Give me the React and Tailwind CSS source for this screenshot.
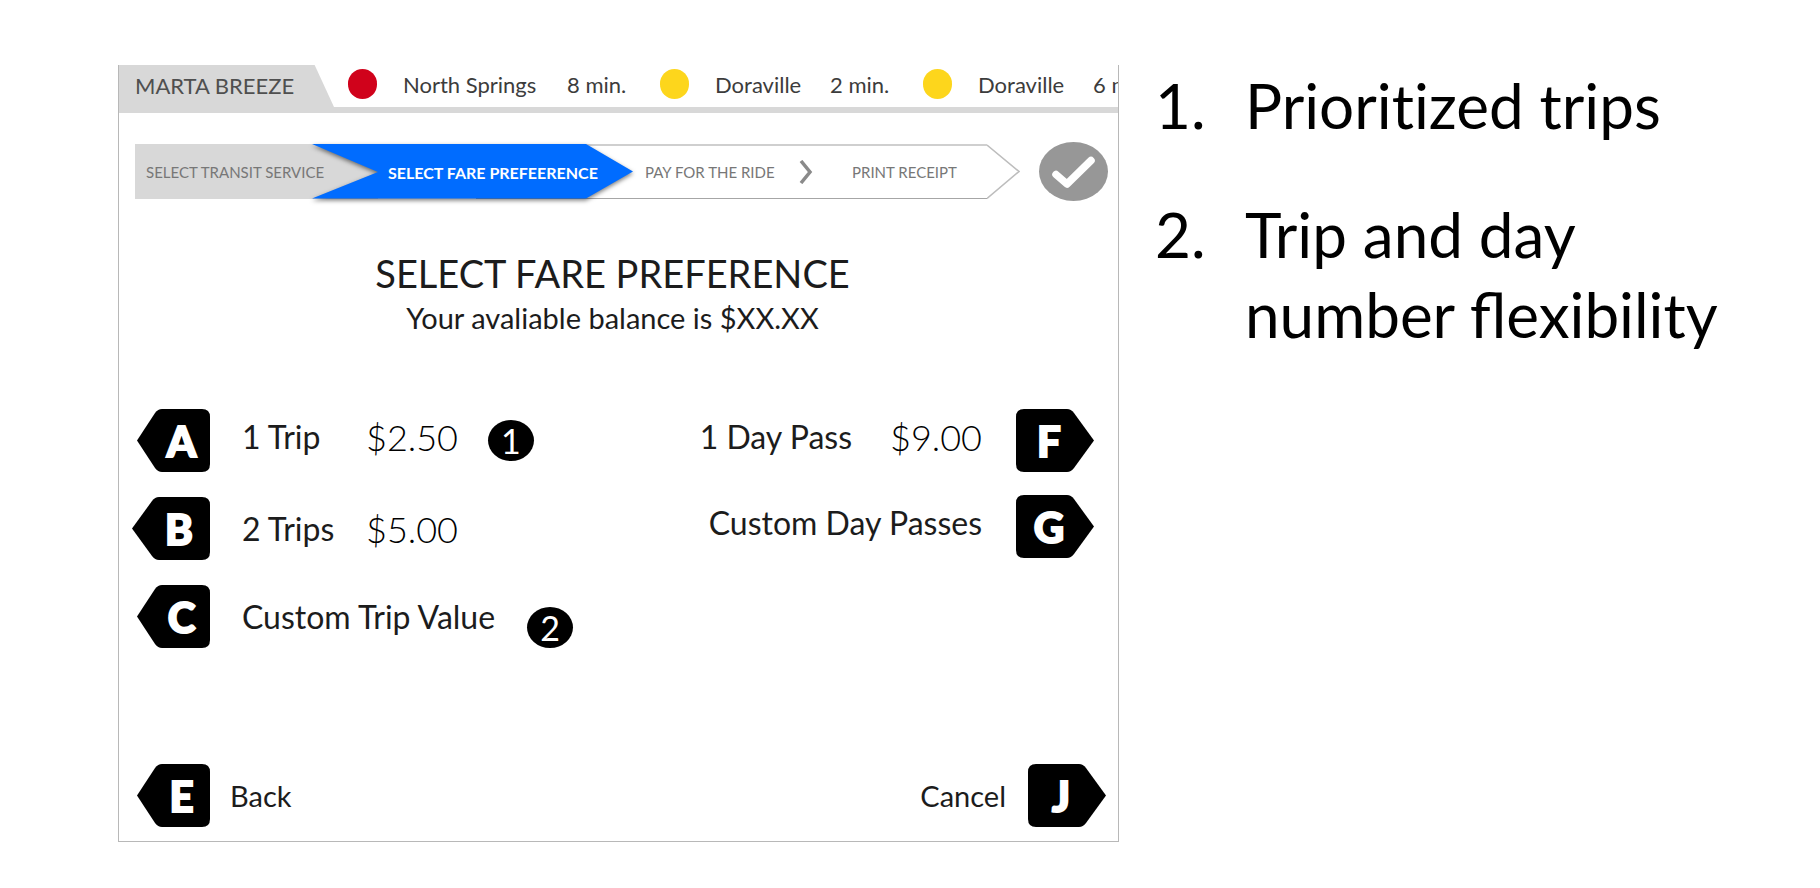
const trains = [
  { name: "North Springs", wait: "8 min.", dot: "bg-[#d0021b]", slot: "w-[312px]" },
  { name: "Doraville", wait: "2 min.", dot: "bg-[#fdd61c]", slot: "w-[263px]" },
  { name: "Doraville", wait: "6 min.", dot: "bg-[#fdd61c]", slot: "w-[263px]" },
];

function Ticker() {
  return (
    <header className="flex h-12 overflow-hidden border-b-6 border-[#d8d8d8]">
      <div className="w-[215px] shrink-0 bg-[#d8d8d8] pt-[7px] pl-4 text-[22px] leading-7 text-[#4f4f4f] [clip-path:polygon(0_0,91%_0,100%_100%,0_100%)]">
        MARTA BREEZE
      </div>
      <ul className="flex min-w-0 flex-1 overflow-hidden pb-1 pl-[14px] text-[22px] text-[#3c3c3c]">
        {trains.map((t, i) => (
          <li key={i} className={`flex shrink-0 items-center pr-[26px] whitespace-nowrap ${t.slot}`}>
            <span className={`mr-[26px] h-[30px] w-[29px] shrink-0 rounded-full ${t.dot}`} />
            <span className="flex-1">{t.name}</span>
            <span className="w-[67px]">{t.wait}</span>
          </li>
        ))}
      </ul>
    </header>
  );
}

function Steps() {
  return (
    <div className="flex items-center gap-[19px] pr-[10px] pl-4">
      <ol className="flex h-[55px] flex-1 items-stretch text-[15px] whitespace-nowrap text-[#777777]">
        <li className="flex w-[243px] shrink-0 items-center bg-[#d8d8d8] pt-0.5 pl-[11px]">SELECT TRANSIT SERVICE</li>
        <li aria-current="step" className="relative -ml-[66px] flex w-[321px] shrink-0 items-center pt-0.5 pl-[76px] text-base font-bold text-white">
          <svg className="absolute inset-0 h-full w-full overflow-visible" viewBox="0 0 321 55" aria-hidden="true">
            <path d="M264 1H321" stroke="#cfcfcf" strokeWidth="2" />
            <path d="M164 54.500H321" stroke="#a6a6a6" />
            <path className="drop-shadow-[0_2px_2px_rgba(0,0,0,0.5)]" d="M0 0H274L321 27.500L274 54.500H0L66 28Z" fill="#006cff" />
          </svg>
          <span className="relative">SELECT FARE PREFEERENCE</span>
        </li>
        <li className="flex flex-1 items-center gap-6 border-t-2 border-b border-t-[#cfcfcf] border-b-[#a6a6a6] pl-3">
          <span className="w-[130px]">PAY FOR THE RIDE</span>
          <svg className="h-6 w-[14px]" viewBox="0 0 14 24" fill="none" stroke="#8a8a8a" strokeWidth="3.500" aria-hidden="true">
            <path d="M2 1L11 12L2 23" />
          </svg>
        </li>
        <li className="flex w-[135px] items-center border-t-2 border-b border-t-[#cfcfcf] border-b-[#a6a6a6]">PRINT RECEIPT</li>
        <li aria-hidden="true" className="w-[33px]">
          <svg className="h-full w-full" viewBox="0 0 33 55" fill="none" stroke="#bdbdbd" strokeWidth="1.500">
            <path d="M0 1L32 27.500L0 54.500" />
          </svg>
        </li>
      </ol>
      <svg className="h-[59px] w-[69px]" viewBox="0 0 69 59" role="img" aria-label="Done">
        <ellipse cx="34.500" cy="29.500" rx="34.500" ry="29.500" fill="#979797" />
        <path d="M17 32.500L28 42L52 18.500" fill="none" stroke="#fff" strokeWidth="7.500" strokeLinecap="round" strokeLinejoin="round" />
      </svg>
    </div>
  );
}

const keyShapes = {
  left: { width: 73, box: "w-[73px] pl-4", d: "M0 31.500L18 4Q21 0 25 0H65Q73 0 73 8V55Q73 63 65 63H25Q21 63 18 59Z" },
  leftWide: { width: 78, box: "w-[78px] pl-4", d: "M0 31.500L20 4Q23 0 27 0H70Q78 0 78 8V55Q78 63 70 63H27Q23 63 20 59Z" },
  right: { width: 78, box: "w-[78px] pr-3", d: "M78 31.500L58 4Q55 0 51 0H8Q0 0 0 8V55Q0 63 8 63H51Q55 63 58 59Z" },
};

function Key({ letter, shape }) {
  const s = keyShapes[shape];
  return (
    <span className={`relative flex h-[63px] shrink-0 items-center justify-center text-[42px] leading-none font-black text-white ${s.box}`}>
      <svg className="absolute inset-0 h-full w-full" viewBox={`0 0 ${s.width} 63`} aria-hidden="true">
        <path d={s.d} />
      </svg>
      <span className="relative [-webkit-text-stroke:2px_white]">{letter}</span>
    </span>
  );
}

function Badge({ n }) {
  return (
    <span className="flex h-[41px] w-[46px] items-center justify-center rounded-[50%] bg-black text-[34px] leading-none text-white">
      {n}
    </span>
  );
}

const price = "text-[36px] font-light text-black";

export default function App() {
  return (
    <main className='flex items-start bg-white pt-[65px] pb-[45px] pl-[118px] font-["Lato",sans-serif] text-[#1c1c1c]'>
      <section className="w-[55vw] shrink-0 border border-t-0 border-[#b8b8b8] pb-[14px]">
        <Ticker />
        <div className="pt-[29px]">
          <Steps />
        </div>
        <h1 className="mt-[50px] pr-3 text-center text-[38px] leading-[44px]">SELECT FARE PREFERENCE</h1>
        <p className="pr-3 text-center text-[29px] leading-[46px]">Your avaliable balance is $XX.XX</p>

        <div className="mt-[68px] flex justify-between pr-6 pl-[13px] text-[32px] leading-9">
          <div className="flex flex-col items-start gap-[25px]">
            <button className="ml-[5px] flex items-center text-left">
              <Key letter="A" shape="left" />
              <span className="box-content w-[124px] pb-2 pl-8">1 Trip</span>
              <span className={`pb-2 ${price}`}>$2.50</span>
              <span className="pl-[30px]"><Badge n="1" /></span>
            </button>
            <button className="flex items-center text-left">
              <Key letter="B" shape="leftWide" />
              <span className="box-content w-[124px] pl-8">2 Trips</span>
              <span className={price}>$5.00</span>
            </button>
            <button className="ml-[5px] flex items-center text-left">
              <Key letter="C" shape="left" />
              <span className="pl-8">Custom Trip Value</span>
              <span className="pt-[22px] pl-8"><Badge n="2" /></span>
            </button>
          </div>
          <div className="flex flex-col items-end gap-[23px]">
            <button className="flex items-center">
              <span className="pb-2">1 Day Pass</span>
              <span className={`pr-[34px] pb-2 pl-[38px] ${price}`}>$9.00</span>
              <Key letter="F" shape="right" />
            </button>
            <button className="flex items-center">
              <span className="pr-[34px] pb-2">Custom Day Passes</span>
              <Key letter="G" shape="right" />
            </button>
          </div>
        </div>

        <div className="mt-[116px] flex justify-between pr-3 pl-[18px] text-[29px] leading-9">
          <button className="flex items-center gap-5">
            <Key letter="E" shape="left" />
            Back
          </button>
          <button className="flex items-center gap-[22px]">
            Cancel
            <Key letter="J" shape="right" />
          </button>
        </div>
      </section>

      <ol className="flex min-w-0 flex-1 flex-col gap-[49px] pl-9 text-[62px] leading-[80px] text-black">
        <li className="flex [font-variant-ligatures:none]">
          <span className="w-[90px] shrink-0">1.</span>
          <span>Prioritized trips</span>
        </li>
        <li className="flex">
          <span className="w-[90px] shrink-0">2.</span>
          <span>Trip and day<br />number flexibility</span>
        </li>
      </ol>
    </main>
  );
}
